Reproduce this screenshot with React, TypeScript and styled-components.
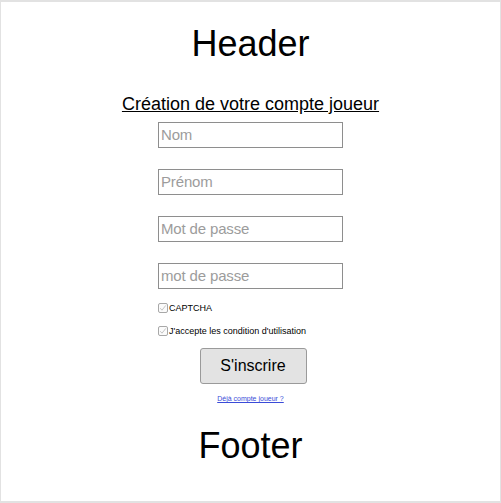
import React from "react";
import styled, { createGlobalStyle } from "styled-components";

const Global = createGlobalStyle`
  html, body { margin: 0; padding: 0; background: #fff; }
  body { font-family: "Liberation Sans", Arial, sans-serif; }
  * { box-sizing: border-box; }
`;

const Frame = styled.div`
  width: 501px;
  height: 503px;
  border: 1px solid #e2e2e2;
  border-top-width: 2px;
  border-bottom-width: 2px;
  display: flex;
  flex-direction: column;
  align-items: center;
  overflow: hidden;
`;

const Big = styled.div`
  font-size: 36px;
  line-height: 42px;
  color: #000;
  text-align: center;
`;

const HeaderBox = styled(Big)`
  margin-top: 21px;
`;

const FooterBox = styled(Big)`
  margin-top: 23px;
`;

const Title = styled.h1`
  margin: 28px 0 0 0;
  font-size: 18px;
  line-height: 22px;
  font-weight: normal;
  text-decoration: underline;
  color: #000;
`;

const Form = styled.form`
  width: 185px;
  display: flex;
  flex-direction: column;
  margin-top: 7px;
`;

const Input = styled.input`
  width: 185px;
  height: 26px;
  border: 1px solid #8e8e8e;
  padding: 0 2px 1px 2px;
  font-family: "Liberation Sans", Arial, sans-serif;
  font-size: 15px;
  letter-spacing: -0.15px;
  margin-bottom: 21px;
  &::placeholder { color: #9c9c9c; }
`;

const CheckRow = styled.label<{ $mt: number }>`
  display: flex;
  align-items: center;
  font-size: 9px;
  color: #000;
  height: 12px;
  margin-top: ${(p) => p.$mt}px;
`;

const Box = styled.span`
  width: 10px;
  height: 10px;
  border: 1px solid #a8a8a8;
  border-radius: 2px;
  background: #fbfbfb;
  display: inline-flex;
  align-items: center;
  justify-content: center;
  margin-right: 1px;
`;

const Button = styled.button`
  align-self: center;
  width: 107px;
  height: 36px;
  margin: 11px 0 0 5px;
  background: #e3e3e3;
  border: 1px solid #9a9a9a;
  border-radius: 3px;
  font-family: "Liberation Sans", Arial, sans-serif;
  font-size: 16px;
  color: #000;
`;

const LinkText = styled.a`
  align-self: center;
  margin-top: 11px;
  font-size: 7px;
  color: #3a4bd8;
  text-decoration: underline;
`;

const Check = () => (
  <svg width="8" height="8" viewBox="0 0 8 8">
    <path d="M1.2 4.2 L3 6.2 L6.8 1.4" fill="none" stroke="#c4c4c4" strokeWidth="1" />
  </svg>
);

export default function App() {
  return (
    <>
      <Global />
      <Frame>
        <HeaderBox>Header</HeaderBox>
        <Title>Création de votre compte joueur</Title>
        <Form onSubmit={(e) => e.preventDefault()}>
          <Input placeholder="Nom" />
          <Input placeholder="Prénom" />
          <Input placeholder="Mot de passe" type="password" />
          <Input placeholder="mot de passe" type="password" />
          <CheckRow $mt={-8}>
            <Box><Check /></Box>CAPTCHA
          </CheckRow>
          <CheckRow $mt={11}>
            <Box><Check /></Box>J'accepte les condition d'utilisation
          </CheckRow>
          <Button type="submit">S'inscrire</Button>
          <LinkText href="#">Déjà compte joueur ?</LinkText>
        </Form>
        <FooterBox>Footer</FooterBox>
      </Frame>
    </>
  );
}
